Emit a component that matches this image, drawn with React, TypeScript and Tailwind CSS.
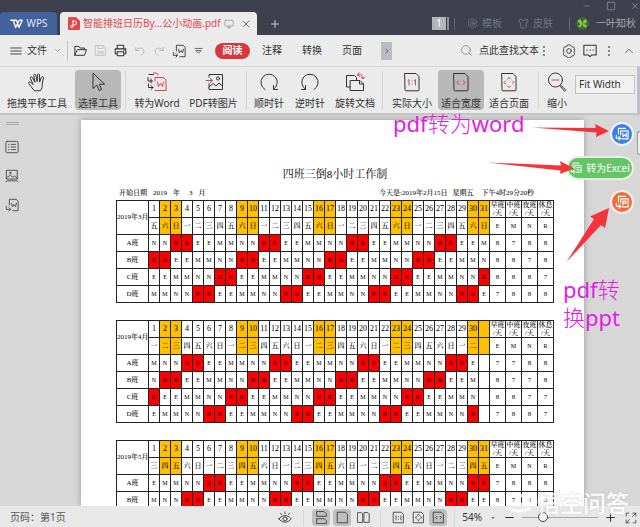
import { useState, type ReactNode } from "react";
import clsx from "clsx";
import { ChevronDown, ChevronRight, ChevronUp, Minus, Monitor, Plus, Search, Shirt, Square, X } from "lucide-react";

const CYCLE = ["E", "E", "M", "M", "N", "N", "R", "R"];
const WEEK = ["一", "二", "三", "四", "五", "六", "日"];
const DAYS = Array.from({ length: 31 }, (_, i) => i + 1);

interface Month {
  label: string;
  length: number;
  firstWeekday: number;
  offsets: number[];
}

const MONTHS: Month[] = [
  { label: "2019年3月", length: 31, firstWeekday: 4, offsets: [4, 6, 0, 2] },
  { label: "2019年4月", length: 30, firstWeekday: 0, offsets: [3, 5, 7, 1] },
  { label: "2019年5月", length: 31, firstWeekday: 2, offsets: [1, 3, 5, 7] },
];

const SHIFTS = [
  { code: "E", name: "早班" },
  { code: "M", name: "中班" },
  { code: "N", name: "夜班" },
  { code: "R", name: "休息" },
];

const shiftOn = (offset: number, day: number) => CYCLE[(offset + day - 1) % 8];

// columns 2, 3, 9, 10 ... are always shaded
const isShaded = (day: number) => day % 7 === 2 || day % 7 === 3;

function Icon({ size = 14, box = 16, className, children }: { size?: number; box?: number; className?: string; children: ReactNode }) {
  return (
    <svg
      width={size}
      height={size}
      viewBox={`0 0 ${box} ${box}`}
      fill="none"
      stroke="currentColor"
      strokeWidth={1}
      strokeLinecap="round"
      strokeLinejoin="round"
      className={clsx("shrink-0", className)}
      aria-hidden="true"
    >
      {children}
    </svg>
  );
}

/* ---------- title bar ---------- */

function TitleBar() {
  return (
    <header className="bg-[#3e404d] text-[#8b8d98]">
      <div className="flex h-3 items-center justify-end gap-[14px]">
        <button aria-label="最小化"><Minus size={10} strokeWidth={1.5} /></button>
        <button aria-label="最大化"><Square size={10} strokeWidth={2} /></button>
        <button aria-label="关闭"><X size={10} strokeWidth={2} /></button>
      </div>
      <div className="flex h-[23px] items-center">
        <button className="flex h-full w-[57px] items-center justify-center gap-1 rounded-t-sm bg-[#42629b] text-[10px] text-[#e4e9f3]">
          <Icon size={13} className="text-white">
            <path d="M1 4h3l3 9 4-8.500M5 4h3l3 9 4-9h-3" strokeWidth={1.6} />
          </Icon>
          WPS
        </button>
        <div className="ml-[3px] flex h-full w-[197px] items-center rounded-t-sm bg-[#ebebeb] pl-2">
          <svg width="12" height="13" viewBox="0 0 12 13" fill="none" aria-hidden="true">
            <path d="M1 0h7l4 4v8a1 1 0 0 1-1 1H1a1 1 0 0 1-1-1V1a1 1 0 0 1 1-1z" fill="#e2474b" />
            <path d="M4 4h2.500a2 2 0 0 1 0 4H5v1.500a1.200 1.200 0 1 1-1.200-1.200H5V4" stroke="#fff" />
          </svg>
          <span className="ml-[3px] whitespace-nowrap text-[10px] text-[#dc4a4e]">智能排班日历By...公小动画.pdf</span>
          <Monitor size={10} className="ml-auto text-[#9a9a9a]" />
          <button aria-label="关闭标签" className="ml-[6px] mr-[5px] text-[#666]"><X size={12} strokeWidth={1.800} /></button>
        </div>
        <button aria-label="新建标签" className="ml-3 text-[#c9cad1]"><Plus size={12} /></button>
        <div className="ml-auto flex items-center whitespace-nowrap text-[10px] text-[#747682]">
          <span className="flex h-[13px] w-[14px] items-center justify-center bg-[#b2b4bc] text-white">1</span>
          <span className="ml-px h-[13px] w-[2px] bg-[#8b8d98]" />
          <span className="ml-[5px] h-3 w-px bg-[#63656f]" />
          <button className="ml-3 flex items-center gap-1">
            <Icon size={11}>
              <path d="M8 1 14 4v7.500L8 15 2 11.500V4z" />
              <circle cx="8" cy="8" r="3.500" />
              <circle cx="8" cy="8" r="1" />
            </Icon>
            模板
          </button>
          <button className="ml-4 flex items-center gap-1">
            <Shirt size={11} />
            皮肤
          </button>
          <span className="ml-4 h-3 w-px bg-[#63656f]" />
          <button className="ml-[6px] mr-[4px] flex items-center gap-[7px] text-[#a3a5ad]">
            <svg width="13" height="13" viewBox="0 0 13 13" aria-hidden="true">
              <circle cx="6.500" cy="6.500" r="6.500" fill="#3f6a2c" />
              <path d="M6.500 7C3 7 1 5 2.500 2.500 5 2 6 4 6.500 7 7 3.500 8.500 1.500 10.500 3c1 2.500-1 3.500-4 4 3.500 0 5 1 3.500 3.500C8 11 7 9.500 6.500 7 5.500 10 4 11 2.500 9.500 2 8 4 7 6.500 7z" fill="#8fbf5a" />
            </svg>
            一叶知秋
          </button>
        </div>
      </div>
    </header>
  );
}

/* ---------- menu bar ---------- */

function MenuBar() {
  return (
    <nav className="flex h-[31px] items-center whitespace-nowrap bg-[#ebebeb] pl-[10px] pr-[4px] text-[10px] text-[#333]">
      <button className="flex items-center gap-[5px]">
        <Icon size={12}><path d="M1 4h14M1 8h14M1 12h14" strokeWidth={1.200} /></Icon>
        文件
        <ChevronDown size={9} className="ml-px text-[#888]" />
      </button>
      <span className="ml-[5px] h-5 w-px bg-[#c4c4c4]" />
      <div className="ml-[6px] flex items-center gap-[7px]">
        <button aria-label="打开">
          <Icon size={13}><path d="M1 13.500V3h5l1.500 2H13v2M1 13.500 4 7h11.500L13 13.500z" strokeWidth={1.200} /></Icon>
        </button>
        <button aria-label="保存" className="text-[#bbb]">
          <Icon size={13}><path d="M2 2h10l2 2v10H2zM5 2v3.500h6V2M5 14V9h6v5M6.500 11h3" /></Icon>
        </button>
        <button aria-label="打印">
          <Icon size={13}><path d="M4 6V1.500h8V6M4 12H1.500V6h13v6H12M4 9.500h8v5H4zM12 7.800h.5" strokeWidth={1.300} /></Icon>
        </button>
        <button aria-label="撤销" className="text-[#aaa]">
          <Icon size={12}><path d="M2.500 3v4.500H7M2.500 7.500c3-4.500 9-4.500 10.500-.5 1 3-2 5-4 7" /></Icon>
        </button>
        <button aria-label="重做" className="text-[#aaa]">
          <Icon size={12}><path d="M13.500 3v4.500H9M13.500 7.500c-3-4.500-9-4.500-10.500-.5-1 3 2 5 4 7" /></Icon>
        </button>
        <button aria-label="转换"><ConvertIcon size={14} /></button>
        <button aria-label="更多">
          <Icon size={11}><path d="M3 5h10M4.500 8.500 8 12l3.500-3.500z" /></Icon>
        </button>
      </div>
      <button className="ml-[11px] h-4 w-[35px] rounded-full bg-[#d5393d] font-bold text-white">阅读</button>
      <button className="ml-3">注释</button>
      <button className="ml-5">转换</button>
      <button className="ml-5">页面</button>
      <button aria-label="展开菜单" className="ml-[19px] flex h-[18px] w-[11px] items-center justify-center bg-[#b9bdc3]">
        <ChevronRight size={8} />
      </button>
      <label className="ml-auto flex items-center gap-[6px]">
        <Search size={13} strokeWidth={1.500} className="text-[#888]" />
        <input aria-label="查找文本" placeholder="点此查找文本" className="w-[61px] bg-transparent outline-none placeholder:text-[#333]" />
      </label>
      <button aria-label="查找选项"><Dots /></button>
      <button aria-label="设置" className="ml-[14px]">
        <Icon size={14}>
          <path d="M6 1.500 8 .8l2 .7 1 1.500 2.300.4 1 1.800-.5 1.800.9 1-.9 1.800.5 1.800-1 1.800-2.300.4-1 1.500-2 .7-2-.7-1-1.500-2.300-.4-1-1.800.5-1.800-.9-1.800.9-1-.5-1.800 1-1.800L5 3z" />
          <circle cx="8" cy="8" r="2.700" />
        </Icon>
      </button>
      <button aria-label="反馈" className="ml-[7px]">
        <Icon size={14}><path d="M1 1.500h14v11h-5l-2 2-2-2H1zM4.500 7h.2M8 7h.2M11.500 7h.2" strokeWidth={1.200} /></Icon>
      </button>
      <button aria-label="更多" className="ml-[8px]"><Dots /></button>
      <button aria-label="收起功能区" className="ml-[9px] text-[#555]"><ChevronUp size={14} strokeWidth={1.500} /></button>
    </nav>
  );
}

function Dots() {
  return (
    <svg width="8" height="12" viewBox="0 0 8 12" fill="#555" aria-hidden="true">
      <circle cx="4" cy="2" r="0.900" />
      <circle cx="4" cy="6" r="0.900" />
      <circle cx="4" cy="10" r="0.900" />
    </svg>
  );
}

function ConvertIcon({ size = 14 }: { size?: number }) {
  return (
    <Icon size={size}>
      <path d="M5 8V1.500h8L15 4v10.500H9M7.500 6l1 4L10.300 7.500 12 10l1-4" />
      <path d="M1.500 9.500V13H6M4.500 11l2 2-2 2" />
    </Icon>
  );
}

// page icon with ruled lines instead of the W, used on the Excel and PPT buttons
function ExportIcon({ lines, size = 14 }: { lines: string; size?: number }) {
  return (
    <Icon size={size}>
      <path d="M4 8V1.500h8M6.500 9V4.500h8.500v9H8" strokeWidth={1.300} />
      <path d={lines} strokeWidth={1.300} />
      <path d="M1.500 9.500V13H6M4.500 11l2 2-2 2" strokeWidth={1.300} />
    </Icon>
  );
}

/* ---------- ribbon ---------- */

function Tool({ label, width, active, children }: { label: string; width: string; active?: boolean; children: ReactNode }) {
  return (
    <button
      className={clsx(
        "flex h-10 shrink-0 flex-col items-center justify-between whitespace-nowrap rounded-sm pt-[2px] text-[10px] leading-[14px] text-[#333]",
        width,
        active && "bg-[#b8b8b8]"
      )}
    >
      {children}
      {label}
    </button>
  );
}

function Divider() {
  return (
    <span className="flex w-2 shrink-0 justify-center self-stretch py-1">
      <span className="w-px bg-[#d3d3d3]" />
    </span>
  );
}

const PAGE = "M3 1.500h11L17 4.500V18a.8.800 0 0 1-.8.800H3.800A.8.800 0 0 1 3 18z";

function Ribbon() {
  const [zoom, setZoom] = useState("Fit Width");
  return (
    <div className="flex h-[49px] items-center overflow-hidden border-b-2 border-t border-b-[#c4c4c4] border-t-[#d5d5d5] bg-[#ebebeb] pl-1">
      <Tool label="拖拽平移工具" width="w-[66px]">
        <Icon size={20} box={20}>
          <path d="M7 18.500c-2-2-3-4.500-5.300-7-.6-1.300.9-2 1.900-1.100L6.200 12.500 3.300 6.200c-.4-1.400 1.300-2.100 1.900-.8L8 10.300 6.800 3.500c-.1-1.500 1.800-1.700 2.100-.3l1.300 6.500.3-6.800c.2-1.400 2-1.300 2 .1l.1 7.100 1.900-4.900c.6-1.300 2.200-.7 1.900.6L15.200 12c.2 2.500-.2 4.500-1.700 6.500z" />
        </Icon>
      </Tool>
      <span className="w-[5px] shrink-0" />
      <Tool label="选择工具" width="w-[46px]" active>
        <Icon size={20} box={20}><path d="M5 1.500v15l3.800-3.400 2.400 5.400 2.400-1-2.400-5.300h5z" /></Icon>
      </Tool>
      <Divider />
      <Tool label="转为Word" width="w-[56px]">
        <Icon size={20} box={20}>
          <path d="M8 9V5.500h8.500L19 8v10.500H8M10.500 10l1 4.500 2-3 2 3 1-4.500M6.500 1H9a2 2 0 0 1 2 2" stroke="#d2474b" />
          <path d="M2 2.500h4.500M1 5.500V9h4.500M4 7v4M1.500 12v3.500H6M4 13.500l2 2-2 2" />
        </Icon>
      </Tool>
      <Tool label="PDF转图片" width="w-[57px]">
        <Icon size={20} box={20}>
          <path d="M5 5V2.500h13.500v15H5V12M5 15l4-3.500 3 2.500 3-3 3.500 3" />
          <circle cx="14" cy="6.500" r="1.600" />
          <path d="M2 8.500h6M6 6l2.500 2.500L6 11" stroke="#d2474b" />
        </Icon>
      </Tool>
      <Divider />
      <Tool label="顺时针" width="w-[38px]">
        <Icon size={20} box={20}><path d="M6 17.500A8.200 8.200 0 1 1 14.500 17.300M14.500 13.500v4h4" /></Icon>
      </Tool>
      <Tool label="逆时针" width="w-[44px]">
        <Icon size={20} box={20}><path d="M14 17.500A8.200 8.200 0 1 0 5.500 17.300M5.500 13.500v4h-4" /></Icon>
      </Tool>
      <Tool label="旋转文档" width="w-[46px]">
        <Icon size={20} box={20}>
          <path d="M5 15H1.500V3.500h8l2 2V8M5.500 8.500h9.500L18.500 12v6.500h-13zM14.500 8.500V12h4" />
          <path d="M12.500 3c3-1.500 5.500 0 5.500 3.500M16 5l2 2 1.700-2M14 .8 12.500 3l2.200 1.300" stroke="#d2474b" />
        </Icon>
      </Tool>
      <Divider />
      <Tool label="实际大小" width="w-[52px]">
        <Icon size={20} box={20}>
          <path d={PAGE} />
          <path d="M6 8.500l1-1V13M12.500 8.500l1-1V13M10 9v.1M10 12v.1" stroke="#d2474b" />
        </Icon>
      </Tool>
      <Tool label="适合宽度" width="w-[46px]" active>
        <Icon size={20} box={20}>
          <path d={PAGE} />
          <path d="M8 8.500l-2.200 2L8 12.500M12 8.500l2.200 2-2.200 2" stroke="#d2474b" />
        </Icon>
      </Tool>
      <Tool label="适合页面" width="w-[50px]">
        <Icon size={20} box={20}>
          <path d={PAGE} />
          <path d="M8.500 7 10 5.500 11.500 7M8.500 14l1.500 1.500 1.500-1.500M6.500 9 5 10.500 6.500 12M13.500 9l1.500 1.500-1.500 1.500" stroke="#d2474b" />
        </Icon>
      </Tool>
      <Divider />
      <Tool label="缩小" width="w-[30px]">
        <Icon size={20} box={20}>
          <circle cx="8.500" cy="8" r="7" />
          <path d="M13.500 13l5.300 5-1.300 1.200-4.500-5.200" />
          <path d="M5 8h7" stroke="#d2474b" />
        </Icon>
      </Tool>
      <select
        aria-label="缩放方式"
        value={zoom}
        onChange={(e) => setZoom(e.target.value)}
        className="ml-[3px] mt-[8px] h-[19px] min-w-0 max-w-[120px] flex-1 appearance-none self-start border border-[#c2c2c2] bg-[#f1f1f1] pl-[3px] text-[10px] text-[#333]"
      >
        <option>Fit Width</option>
        <option>Fit Page</option>
      </select>
      <span className="ml-[2px] w-[3px] shrink-0 self-stretch bg-[#bdbdcb]" />
    </div>
  );
}

/* ---------- document ---------- */

function MonthTable({ month }: { month: Month }) {
  return (
    <table className="w-full table-fixed border-collapse text-center text-[6px] leading-none text-black [&_td]:border [&_td]:border-[#222] [&_td]:p-0 [&_th]:border [&_th]:border-[#222] [&_th]:p-0 [&_tr]:h-[17px]">
      <colgroup>
        <col className="w-[32px]" />
        {DAYS.map((d) => <col key={d} className="w-[11px]" />)}
        {SHIFTS.map((s) => <col key={s.code} className="w-[16px]" />)}
      </colgroup>
      <tbody>
        <tr>
          <th rowSpan={2} className="whitespace-nowrap text-[7px] font-medium">{month.label}</th>
          {DAYS.map((d) => (
            <th key={d} className={clsx("text-[8px] font-medium", isShaded(d) && "bg-[#ffc000]")}>
              {d <= month.length ? d : ""}
            </th>
          ))}
          {SHIFTS.map((s) => (
            <th key={s.code} className="text-[7px] leading-[8px] font-medium">{s.name}<br />/天</th>
          ))}
        </tr>
        <tr>
          {DAYS.map((d) => (
            <td key={d} className={clsx("text-[7px] font-medium", isShaded(d) && "bg-[#ffc000]")}>
              {d <= month.length ? WEEK[(month.firstWeekday + d - 1) % 7] : ""}
            </td>
          ))}
          {SHIFTS.map((s) => <td key={s.code}>{s.code}</td>)}
        </tr>
        {month.offsets.map((offset, i) => {
          const row = DAYS.slice(0, month.length).map((d) => shiftOn(offset, d));
          return (
            <tr key={i}>
              <th className="text-[7px] font-medium">{"ABCD"[i]}班</th>
              {DAYS.map((d) => (
                <td key={d} className={clsx(row[d - 1] === "R" && "bg-[#fa0000] font-bold text-[#5c0000]")}>
                  {row[d - 1]}
                </td>
              ))}
              {SHIFTS.map((s) => <td key={s.code} className="text-[7px]">{row.filter((c) => c === s.code).length}</td>)}
            </tr>
          );
        })}
      </tbody>
    </table>
  );
}

function Sidebar() {
  return (
    <aside className="flex w-[81px] shrink-0 flex-col items-start gap-[15px] pl-[5px] pt-[7px] text-[#444]">
      <span className="ml-px h-[3px] w-[13px] border-y border-[#aaa]" />
      <button aria-label="目录">
        <Icon>
          <rect x="1" y="1.500" width="14" height="13" rx="1.500" />
          <path d="M4 5h.5M4 8h.5M4 11h.5M7 5h5M7 8h5M7 11h5" />
        </Icon>
      </button>
      <button aria-label="缩略图">
        <Icon>
          <path d="M2 1.500h12v10H2zM2 10l4-3 3 2.500 2-1.500 3 2.500M1 14.500l1.500-1h11l1.500 1" />
          <circle cx="6" cy="4.500" r="0.800" />
        </Icon>
      </button>
      <button aria-label="转换"><ConvertIcon size={14} /></button>
    </aside>
  );
}

function ExportButtons() {
  return (
    <div className="absolute right-[6px] top-[7px] flex flex-col items-end gap-[10px] text-[10px] text-white">
      <button aria-label="转为Word" className="flex size-6 items-center justify-center rounded-full border-2 border-[#eef3fb] bg-[#3d7fe8]">
        <ExportIcon lines="M9 7v4l2-2 2 2V7" />
      </button>
      <button className="flex h-6 w-[68px] items-center justify-center gap-[4px] whitespace-nowrap rounded-full border-2 border-[#e3f2e3] bg-[#64c466]">
        <ExportIcon size={12} lines="M9 7.500h4M9 10.500h4" />
        转为Excel
      </button>
      <button aria-label="转为PPT" className="flex size-6 items-center justify-center rounded-full border-2 border-[#fbeee8] bg-[#ef6c3c]">
        <ExportIcon lines="M9 11.500V7h3.500v2.500H9" />
      </button>
    </div>
  );
}

function Annotations() {
  return (
    <div className="pointer-events-none absolute right-0 top-0 h-[240px] w-[250px] text-[22px] leading-[28px] text-[#e61ae6]">
      <svg width="250" height="160" viewBox="390 115 250 160" fill="#f5333a" className="absolute left-0 top-0" aria-hidden="true">
        <path d="M532 127.500 596 128 595 124 609 131 596 137 596.500 132.500z" />
        <path d="M488 162.500 561 165.500 560 161 574 168.500 560 174 560.500 170.500z" />
        <path d="M566.500 262 594 219 590 216.500 609 208 605 228 601 225z" />
      </svg>
      <p className="absolute left-[3px] top-[-6px] whitespace-nowrap">
        pdf<span className="font-light">转为</span>word
      </p>
      <p className="absolute left-[173px] top-[160px] whitespace-nowrap">
        pdf<span className="font-light">转</span>
        <br />
        <span className="font-light">换</span>ppt
      </p>
    </div>
  );
}

function Workspace() {
  return (
    <div className="relative flex min-h-0 flex-1">
      <main className="relative flex flex-1 overflow-hidden bg-[#d7d7d7]">
        <Sidebar />
        <article className="mr-[56px] mt-[5px] flex-1 bg-white pl-[35px] pr-[30px] pt-[47px] font-['Liberation_Serif','Noto_Serif_CJK_SC','Noto_Sans_CJK_SC',serif] shadow-[0_0_6px_#999]">
          <h1 className="text-center text-[11px] leading-[15px] text-black">四班三倒8小时工作制</h1>
          <div className="flex justify-between whitespace-nowrap pb-[2px] pl-[3px] pr-[20px] pt-[6px] text-[7px] leading-[10px] font-medium text-black">
            <p className="flex gap-[6px]">
              <span>开始日期</span><span>2019</span><span>年</span><span className="ml-[3px]">3</span><span>月</span>
            </p>
            <p className="flex gap-[5px]">
              <span>今天是:2019年2月15日</span><span>星期五</span><span className="ml-[3px]">下午4时29分20秒</span>
            </p>
          </div>
          <div className="flex flex-col gap-[17px]">
            {MONTHS.map((m) => <MonthTable key={m.label} month={m} />)}
          </div>
        </article>
        <ExportButtons />
        <span className="absolute right-0 top-[16px] h-6 w-[3px] rounded-l border border-r-0 border-[#999] bg-[#eee]" />
      </main>
      <Annotations />
    </div>
  );
}

/* ---------- status bar ---------- */

function ViewButton({ label, active, children }: { label: string; active?: boolean; children: ReactNode }) {
  return (
    <button aria-label={label} className={clsx("flex h-[17px] w-[18px] items-center justify-center rounded-sm", active && "bg-[#bfbfbf]")}>
      <Icon size={13}>{children}</Icon>
    </button>
  );
}

const SMALL_PAGE = "M2 1.500h9.500L14 4v10.500H2z";

function StatusBar() {
  const [zoom, setZoom] = useState(24);
  return (
    <footer className="relative flex h-[21px] items-center whitespace-nowrap bg-[#e8e8e8] pl-[10px] pr-[3px] pt-[2px] text-[10px] text-[#555]">
      <span>页码：第1页</span>
      <div className="ml-auto flex items-center text-[#333]">
        <button aria-label="护眼模式">
          <Icon size={14}>
            <path d="M1 9c3.500-5 10.500-5 14 0-3.500 5-10.500 5-14 0zM8 3V1M4 4 3 2.500M12 4l1-1.500" />
            <circle cx="8" cy="9" r="2.300" />
          </Icon>
        </button>
        <span className="ml-[11px] mr-2 h-4 w-px bg-[#d6d6d6]" />
        <div className="flex gap-[3px]">
          <ViewButton label="连续" active><path d="M2 1v5.500h12V3.500L11.500 1zM2 15V9.500h9.500L14 12v3z" /></ViewButton>
          <ViewButton label="单页" active><path d={SMALL_PAGE} /></ViewButton>
          <ViewButton label="双页"><path d="M1 2h4.500L7 3.500V14H1zM9 2h4.500L15 3.500V14H9z" /></ViewButton>
        </div>
        <span className="mx-2 h-4 w-px bg-[#d6d6d6]" />
        <div className="flex gap-[2px]">
          <ViewButton label="实际大小"><path d={SMALL_PAGE} /><path d="M5 6v5M11 6v5M8 7v.1M8 10v.1" /></ViewButton>
          <ViewButton label="适合页面"><path d={SMALL_PAGE} /><path d="M7 5.500 8 4l1 1.500M7 10.500 8 12l1-1.500M5.500 7 4 8l1.500 1M10.500 7 12 8l-1.500 1" /></ViewButton>
          <ViewButton label="适合宽度" active><path d={SMALL_PAGE} /><path d="M6 6.500 4.500 8 6 9.500M10 6.500 11.500 8 10 9.500" /></ViewButton>
        </div>
        <span className="mx-[7px] h-4 w-px bg-[#d6d6d6]" />
        <span>54%</span>
        <span className="ml-[9px] border-x-2 border-t-2 border-x-transparent border-t-[#777]" />
        <button aria-label="缩小" className="ml-2"><Minus size={13} /></button>
        <input
          type="range"
          aria-label="缩放"
          value={zoom}
          onChange={(e) => setZoom(Number(e.target.value))}
          className="ml-[6px] h-3 w-[76px] appearance-none bg-transparent [&::-webkit-slider-runnable-track]:h-px [&::-webkit-slider-runnable-track]:bg-[#a5a5a5] [&::-webkit-slider-thumb]:-mt-[5px] [&::-webkit-slider-thumb]:size-[10px] [&::-webkit-slider-thumb]:appearance-none [&::-webkit-slider-thumb]:rounded-full [&::-webkit-slider-thumb]:border [&::-webkit-slider-thumb]:border-[#444] [&::-webkit-slider-thumb]:bg-[#f4f4f4]"
        />
        <button aria-label="放大" className="ml-[6px]"><Plus size={13} /></button>
        <button aria-label="全屏" className="ml-[8px]">
          <Icon size={12}><path d="M10.500 1.500H14.500V5.500M14.500 1.500 10 6M5.500 14.500H1.500V10.500M1.500 14.500 6 10M1.500 5V1.500H5M14.500 11v3.500H11" /></Icon>
        </button>
      </div>
      <div className="pointer-events-none absolute bottom-[11px] right-[11px] flex items-center gap-1 text-[23px] leading-[26px] font-bold text-white opacity-80 [text-shadow:0_0_2px_#bbb]">
        <svg width="28" height="22" viewBox="0 0 26 22" fill="none" stroke="#fff" strokeWidth="3" aria-hidden="true">
          <circle cx="8" cy="8" r="5" />
          <circle cx="18" cy="8" r="5" />
          <path d="M2 16c5 4 17 4 22 0" />
        </svg>
        悟空问答
      </div>
    </footer>
  );
}

export default function App() {
  return (
    <div className="flex h-screen flex-col overflow-hidden bg-[#ebebeb] font-['Noto_Sans','Noto_Sans_CJK_SC',sans-serif]">
      <TitleBar />
      <MenuBar />
      <Ribbon />
      <Workspace />
      <StatusBar />
    </div>
  );
}
